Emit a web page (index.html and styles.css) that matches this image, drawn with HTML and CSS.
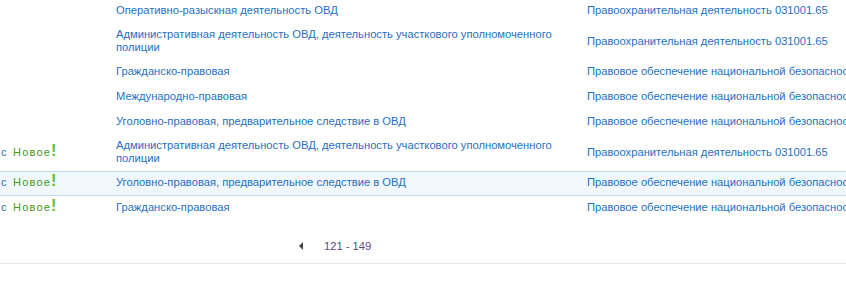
FILE: index.html
```html
<!DOCTYPE html>
<html lang="ru">
<head>
<meta charset="utf-8">
<title>Список</title>
<link rel="stylesheet" href="styles.css">
</head>
<body>
<div class="list">
  <div class="row">
    <div class="c-tail"></div>
    <div class="c-new"></div>
    <div class="c-name"><a href="#">Оперативно-разыскная деятельность ОВД</a></div>
    <div class="c-spec"><a href="#">Правоохранительная деятельность 031001.65</a></div>
  </div>
  <div class="row">
    <div class="c-tail"></div>
    <div class="c-new"></div>
    <div class="c-name"><a href="#">Административная деятельность ОВД, деятельность участкового уполномоченного полиции</a></div>
    <div class="c-spec"><a href="#">Правоохранительная деятельность 031001.65</a></div>
  </div>
  <div class="row">
    <div class="c-tail"></div>
    <div class="c-new"></div>
    <div class="c-name"><a href="#">Гражданско-правовая</a></div>
    <div class="c-spec"><a href="#">Правовое обеспечение национальной безопасности 030501.65</a></div>
  </div>
  <div class="row">
    <div class="c-tail"></div>
    <div class="c-new"></div>
    <div class="c-name"><a href="#">Международно-правовая</a></div>
    <div class="c-spec"><a href="#">Правовое обеспечение национальной безопасности 030501.65</a></div>
  </div>
  <div class="row">
    <div class="c-tail"></div>
    <div class="c-new"></div>
    <div class="c-name"><a href="#">Уголовно-правовая, предварительное следствие в ОВД</a></div>
    <div class="c-spec"><a href="#">Правовое обеспечение национальной безопасности 030501.65</a></div>
  </div>
  <div class="row">
    <div class="c-tail"><a href="#">с</a></div>
    <div class="c-new"><span class="new">Новое</span><span class="bang">!</span></div>
    <div class="c-name"><a href="#">Административная деятельность ОВД, деятельность участкового уполномоченного полиции</a></div>
    <div class="c-spec"><a href="#">Правоохранительная деятельность 031001.65</a></div>
  </div>
  <div class="row row-hover">
    <div class="c-tail"><a href="#">с</a></div>
    <div class="c-new"><span class="new">Новое</span><span class="bang">!</span></div>
    <div class="c-name"><a href="#">Уголовно-правовая, предварительное следствие в ОВД</a></div>
    <div class="c-spec"><a href="#">Правовое обеспечение национальной безопасности 030501.65</a></div>
  </div>
  <div class="row">
    <div class="c-tail"><a href="#">с</a></div>
    <div class="c-new"><span class="new">Новое</span><span class="bang">!</span></div>
    <div class="c-name"><a href="#">Гражданско-правовая</a></div>
    <div class="c-spec"><a href="#">Правовое обеспечение национальной безопасности 030501.65</a></div>
  </div>
</div>
<div class="pager">
  <a href="#" class="prev" aria-label="Назад"><svg width="5" height="8" viewBox="0 0 5 8"><path d="M4 0 L4 8 L0 4 Z" fill="#444"/></svg></a>
  <span class="range">121 - 149</span>
</div>
<div class="rule"></div>
</body>
</html>
```
FILE: styles.css
```css
html, body {
  margin: 0;
  padding: 0;
  background: #fff;
  overflow: hidden;
}
body {
  width: 846px;
  font-family: "Liberation Sans", Arial, sans-serif;
  font-size: 11.2px;
  line-height: 13px;
  color: #1f6fc0;
}
a {
  color: #1f6fc0;
  text-decoration: none;
}
.list {
  margin-top: -1px;
}
.row {
  display: grid;
  grid-template-columns: 13px 103px 471px auto;
  align-items: center;
  min-height: 15px;
  padding: 3px 0 5px;
  border-top: 1px solid transparent;
  border-bottom: 1px solid transparent;
}
.row-hover {
  background: #f1f8fd;
  border-top-color: #bcdff4;
  border-bottom-color: #bcdff4;
}
.c-tail {
  padding-left: 1px;
}
.c-new {
  display: flex;
  align-items: center;
  height: 15px;
}
.new {
  font-family: "Liberation Sans", Arial, sans-serif;
  font-size: 11px;
  letter-spacing: 1.2px;
  color: #3e9a1c;
}
.bang {
  font-family: "Liberation Sans", Arial, sans-serif;
  font-weight: bold;
  font-size: 16px;
  line-height: 15px;
  color: #5cc51c;
  position: relative;
  top: -2px;
}
.c-name {
  padding-right: 16px;
}
.c-spec {
  white-space: nowrap;
}
.pager {
  display: flex;
  align-items: center;
  height: 34px;
  padding-top: 8px;
  padding-left: 299px;
}
.prev {
  display: flex;
  width: 5px;
  margin-right: 20px;
}
.range {
  color: #5e4a86;
}
.rule {
  height: 1px;
  background: #e6e6e6;
}
```
